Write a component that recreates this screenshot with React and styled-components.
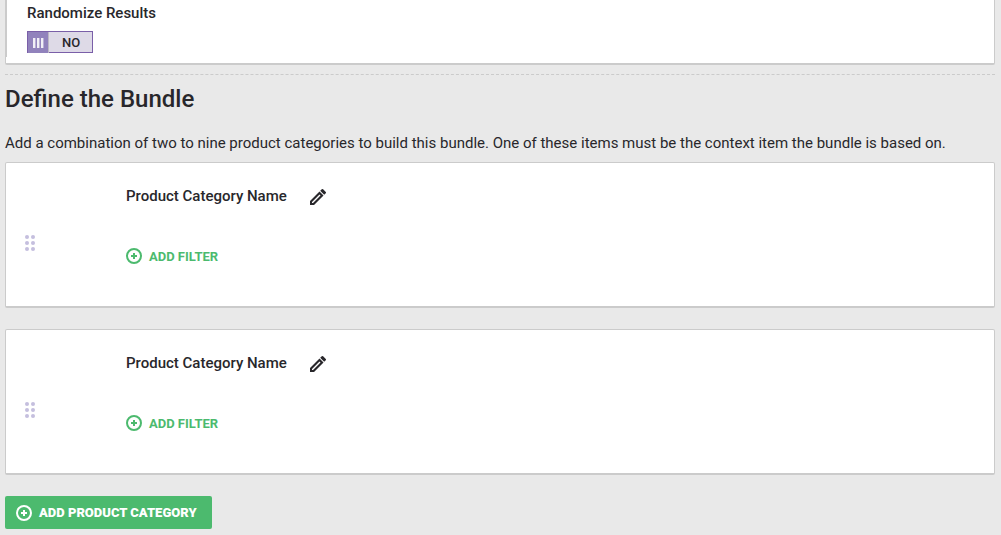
import React, { useState } from 'react'
import styled, { createGlobalStyle } from 'styled-components'

const GlobalStyle = createGlobalStyle`
  * {
    box-sizing: border-box;
  }
  body {
    margin: 0;
    background: #e9e9e9;
    color: #28272b;
    font-family: Roboto, sans-serif;
    font-size: 15px;
    line-height: 20px;
  }
`

const Page = styled.main`
  padding: 0 6px 6px 5px;
`

const Panel = styled.section`
  background: #fff;
  border: 1px solid #cbcbcb;
  border-bottom-width: 2px;
  border-radius: 2px;
`

const Settings = styled(Panel)`
  border-top: 0;
  border-radius: 0 0 2px 2px;
  padding-bottom: 6px;
`

const SettingsGroup = styled.div`
  display: flex;
  flex-direction: column;
  align-items: flex-start;
  gap: 8px;
  padding: 3px 20px 4px;
  border-left: 1px solid #cbcbcb;
`

const Label = styled.label`
  font-weight: 500;
`

const Toggle = styled.label`
  display: grid;
  grid-template-columns: 20px 1fr;
  width: 66px;
  height: 22px;
  border: 1px solid #7a5fa8;
  background: #dedae7;
  font-size: 13px;
  font-weight: 500;
  cursor: pointer;
`

const ToggleInput = styled.input`
  grid-area: 1 / 1 / 2 / 3;
  appearance: none;
  margin: 0;
  cursor: pointer;
`

const ToggleKnob = styled.span`
  grid-area: 1 / 1 / 2 / 2;
  display: flex;
  align-items: center;
  justify-content: center;
  gap: 1px;
  background: #9182bc;
  box-shadow: 1px 0 0 #bcb7c4;
`

const Grip = styled.span`
  width: 3px;
  height: 10px;
  background: #f1eff6;
  border-right: 1px solid #b9afd5;
`

const ToggleText = styled.span`
  grid-area: 1 / 2 / 2 / 3;
  padding-top: 1px;
  padding-left: 2px;
  text-align: center;
`

const Divider = styled.hr`
  margin: 9px 0 8px;
  border: 0;
  border-top: 1px dashed #cbcbcb;
`

const Title = styled.h1`
  margin: 0 0 18px;
  font-size: 24px;
  line-height: 32px;
  font-weight: 500;
`

const Intro = styled.p`
  margin: 0 0 9px;
`

const CategoryList = styled.div`
  display: flex;
  flex-direction: column;
  gap: 21px;
  margin-bottom: 21px;
`

const CategoryCard = styled(Panel)`
  display: grid;
  grid-template-columns: 120px 1fr;
  align-items: center;
  min-height: 146px;
`

const DragHandle = styled.button`
  display: flex;
  justify-self: start;
  margin-left: 18px;
  margin-top: 16px;
  padding: 0;
  border: 0;
  background: none;
  color: #c5bfde;
  cursor: grab;
`

const CategoryBody = styled.div`
  display: flex;
  flex-direction: column;
  align-items: flex-start;
  gap: 38px;
  padding-bottom: 19px;
`

const CategoryHeader = styled.div`
  display: flex;
  align-items: center;
  gap: 20px;
`

const CategoryName = styled.h2`
  margin: 0;
  font-size: 15px;
  line-height: 20px;
  font-weight: 500;
`

const IconButton = styled.button`
  display: flex;
  padding: 2px 0 0;
  border: 0;
  background: none;
  color: #28272b;
  cursor: pointer;
`

const Button = styled.button`
  display: flex;
  align-items: center;
  gap: 7px;
  min-width: ${(props) => (props.$filled ? '207px' : '0')};
  padding: ${(props) => (props.$filled ? '0 11px' : '0')};
  height: ${(props) => (props.$filled ? '33px' : '20px')};
  border: 0;
  border-radius: 2px;
  background: ${(props) => (props.$filled ? '#4cba6e' : 'none')};
  color: ${(props) => (props.$filled ? '#fff' : '#4cba6e')};
  font-family: inherit;
  font-size: 13px;
  font-weight: ${(props) => (props.$filled ? 900 : 700)};
  text-transform: uppercase;
  cursor: pointer;
`

const PlusIcon = () => (
  <svg width="16" height="16" viewBox="0 0 16 16" fill="none" stroke="currentColor" strokeWidth="2" aria-hidden="true">
    <circle cx="8" cy="8" r="7" />
    <path d="M8 5v6M5 8h6" />
  </svg>
)

const PencilIcon = () => (
  <svg width="22" height="22" viewBox="0 0 22 22" aria-hidden="true">
    <path
      fill="currentColor"
      fillRule="evenodd"
      d="M3 15V19h4L16.5 9.5 12.5 5.5zM5 17v-1l7.500-7.500 1 1L6 17zM13.200 4.800 14.800 3.200q.7-.5 1.300 0L18.800 5.900q.6.700 0 1.300l-1.600 1.600z"
    />
  </svg>
)

const DragIcon = () => (
  <svg width="12" height="18" viewBox="0 0 12 18" fill="currentColor" aria-hidden="true">
    {[3, 9, 15].map((y) => (
      <g key={y}>
        <circle cx="3" cy={y} r="2" />
        <circle cx="9" cy={y} r="2" />
      </g>
    ))}
  </svg>
)

function Category({ name }) {
  return (
    <CategoryCard>
      <DragHandle type="button" aria-label="Reorder category">
        <DragIcon />
      </DragHandle>
      <CategoryBody>
        <CategoryHeader>
          <CategoryName>{name}</CategoryName>
          <IconButton type="button" aria-label="Edit name">
            <PencilIcon />
          </IconButton>
        </CategoryHeader>
        <Button type="button">
          <PlusIcon />
          Add Filter
        </Button>
      </CategoryBody>
    </CategoryCard>
  )
}

function App() {
  const [randomize, setRandomize] = useState(false)
  const [categories, setCategories] = useState(['Product Category Name', 'Product Category Name'])

  const addCategory = () => {
    // a bundle holds nine categories at most
    if (categories.length < 9) {
      setCategories([...categories, 'Product Category Name'])
    }
  }

  return (
    <>
      <GlobalStyle />
      <Page>
        <Settings>
          <SettingsGroup>
            <Label htmlFor="randomize">Randomize Results</Label>
            <Toggle>
              <ToggleInput
                id="randomize"
                type="checkbox"
                checked={randomize}
                onChange={(e) => setRandomize(e.target.checked)}
              />
              <ToggleKnob>
                <Grip />
                <Grip />
                <Grip />
              </ToggleKnob>
              <ToggleText>{randomize ? 'YES' : 'NO'}</ToggleText>
            </Toggle>
          </SettingsGroup>
        </Settings>
        <Divider />
        <Title>Define the Bundle</Title>
        <Intro>
          Add a combination of two to nine product categories to build this bundle. One of these items must be the
          context item the bundle is based on.
        </Intro>
        <CategoryList>
          {categories.map((name, i) => (
            <Category key={i} name={name} />
          ))}
        </CategoryList>
        <Button type="button" $filled onClick={addCategory}>
          <PlusIcon />
          Add Product Category
        </Button>
      </Page>
    </>
  )
}

export default App
